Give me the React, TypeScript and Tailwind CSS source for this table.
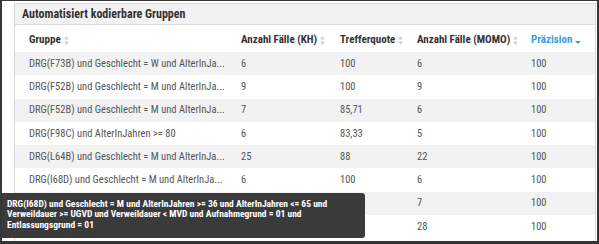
import React from "react";

const FONT = '"Roboto Condensed", "Liberation Sans Narrow", "DejaVu Sans Condensed", "Arial Narrow", sans-serif';

function SortIcon() {
  return (
    <svg width="5" height="9" viewBox="0 0 5 9" className="ml-[3px] shrink-0">
      <path d="M2.5 0 L5 3.5 L0 3.5 Z" fill="#d0d0d0" />
      <path d="M0 5.5 L5 5.5 L2.5 9 Z" fill="#d0d0d0" />
    </svg>
  );
}

function DescIcon() {
  return (
    <svg width="6" height="3" viewBox="0 0 6 3" className="ml-[3px] mt-[4px] shrink-0">
      <path d="M0 0 L6 0 L3 3 Z" fill="#3d9be0" />
    </svg>
  );
}

const rows: [string, string, string, string, string][] = [
  ["DRG(F73B) und Geschlecht = W und AlterInJa...", "6", "100", "6", "100"],
  ["DRG(F52B) und Geschlecht = M und AlterInJa...", "9", "100", "9", "100"],
  ["DRG(F52B) und Geschlecht = M und AlterInJa...", "7", "85,71", "6", "100"],
  ["DRG(F98C) und AlterInJahren >= 80", "6", "83,33", "5", "100"],
  ["DRG(L64B) und Geschlecht = M und AlterInJa...", "25", "88", "22", "100"],
  ["DRG(I68D) und Geschlecht = M und AlterInJa...", "6", "100", "6", "100"],
  ["DRG(B80Z) und Geschlecht = M und AlterInJa...", "7", "100", "7", "100"],
  ["DRG(G67D) und AlterInJahren >= 18 und Ver...", "28", "100", "28", "100"],
];

export default function App() {
  return (
    <div
      className="relative w-[599px] h-[244px] overflow-hidden bg-white border-l-2 border-t border-r-2 border-b-[3px] border-[#363636] pl-[12px] pt-[2px] pr-[1px]"
      style={{ fontFamily: FONT }}
    >
      <div className="border border-[#dadada] h-[260px]">
        <div className="h-[21px] bg-[#f2f2f2] border-b border-[#dedede] flex items-center pl-[7px]">
          <span className="text-[12px] font-bold text-[#333]">Automatisiert kodierbare Gruppen</span>
        </div>
        <div className="grid grid-cols-[212px_99px_77px_114px_1fr] pl-[14px] h-[27px] items-center text-[11px] font-bold text-[#333]">
          <div className="flex items-center pt-[4px]">Gruppe<SortIcon /></div>
          <div className="flex items-center pt-[4px]">Anzahl Fälle (KH)<SortIcon /></div>
          <div className="flex items-center pt-[4px]">Trefferquote<SortIcon /></div>
          <div className="flex items-center pt-[4px]">Anzahl Fälle (MOMO)<SortIcon /></div>
          <div className="flex items-center pt-[4px] text-[#3d9be0]">Präzision<DescIcon /></div>
        </div>
        <div className="flex flex-col">
          {rows.map((r, i) => (
            <div
              key={i}
              className={`grid grid-cols-[212px_99px_77px_114px_1fr] pl-[14px] h-[23.25px] items-center text-[10.5px] text-[#555] whitespace-nowrap ${i % 2 === 0 ? "bg-[#f2f2f2]" : "bg-white"}`}
            >
              <div>{r[0]}</div>
              <div>{r[1]}</div>
              <div>{r[2]}</div>
              <div>{r[3]}</div>
              <div>{r[4]}</div>
            </div>
          ))}
        </div>
      </div>

      <div className="absolute left-0 top-[192px] w-[363px] h-[45px] bg-[#3a3a3a] rounded-r-[3px] pl-[5px] pt-[6px] text-[9.5px] leading-[10.3px] font-bold text-white whitespace-nowrap">
        <div>DRG(I68D) und Geschlecht = M und AlterInJahren &gt;= 36 und AlterInJahren &lt;= 65 und</div>
        <div>Verweildauer &gt;= UGVD und Verweildauer &lt; MVD und Aufnahmegrund = 01 und</div>
        <div>Entlassungsgrund = 01</div>
      </div>
    </div>
  );
}
